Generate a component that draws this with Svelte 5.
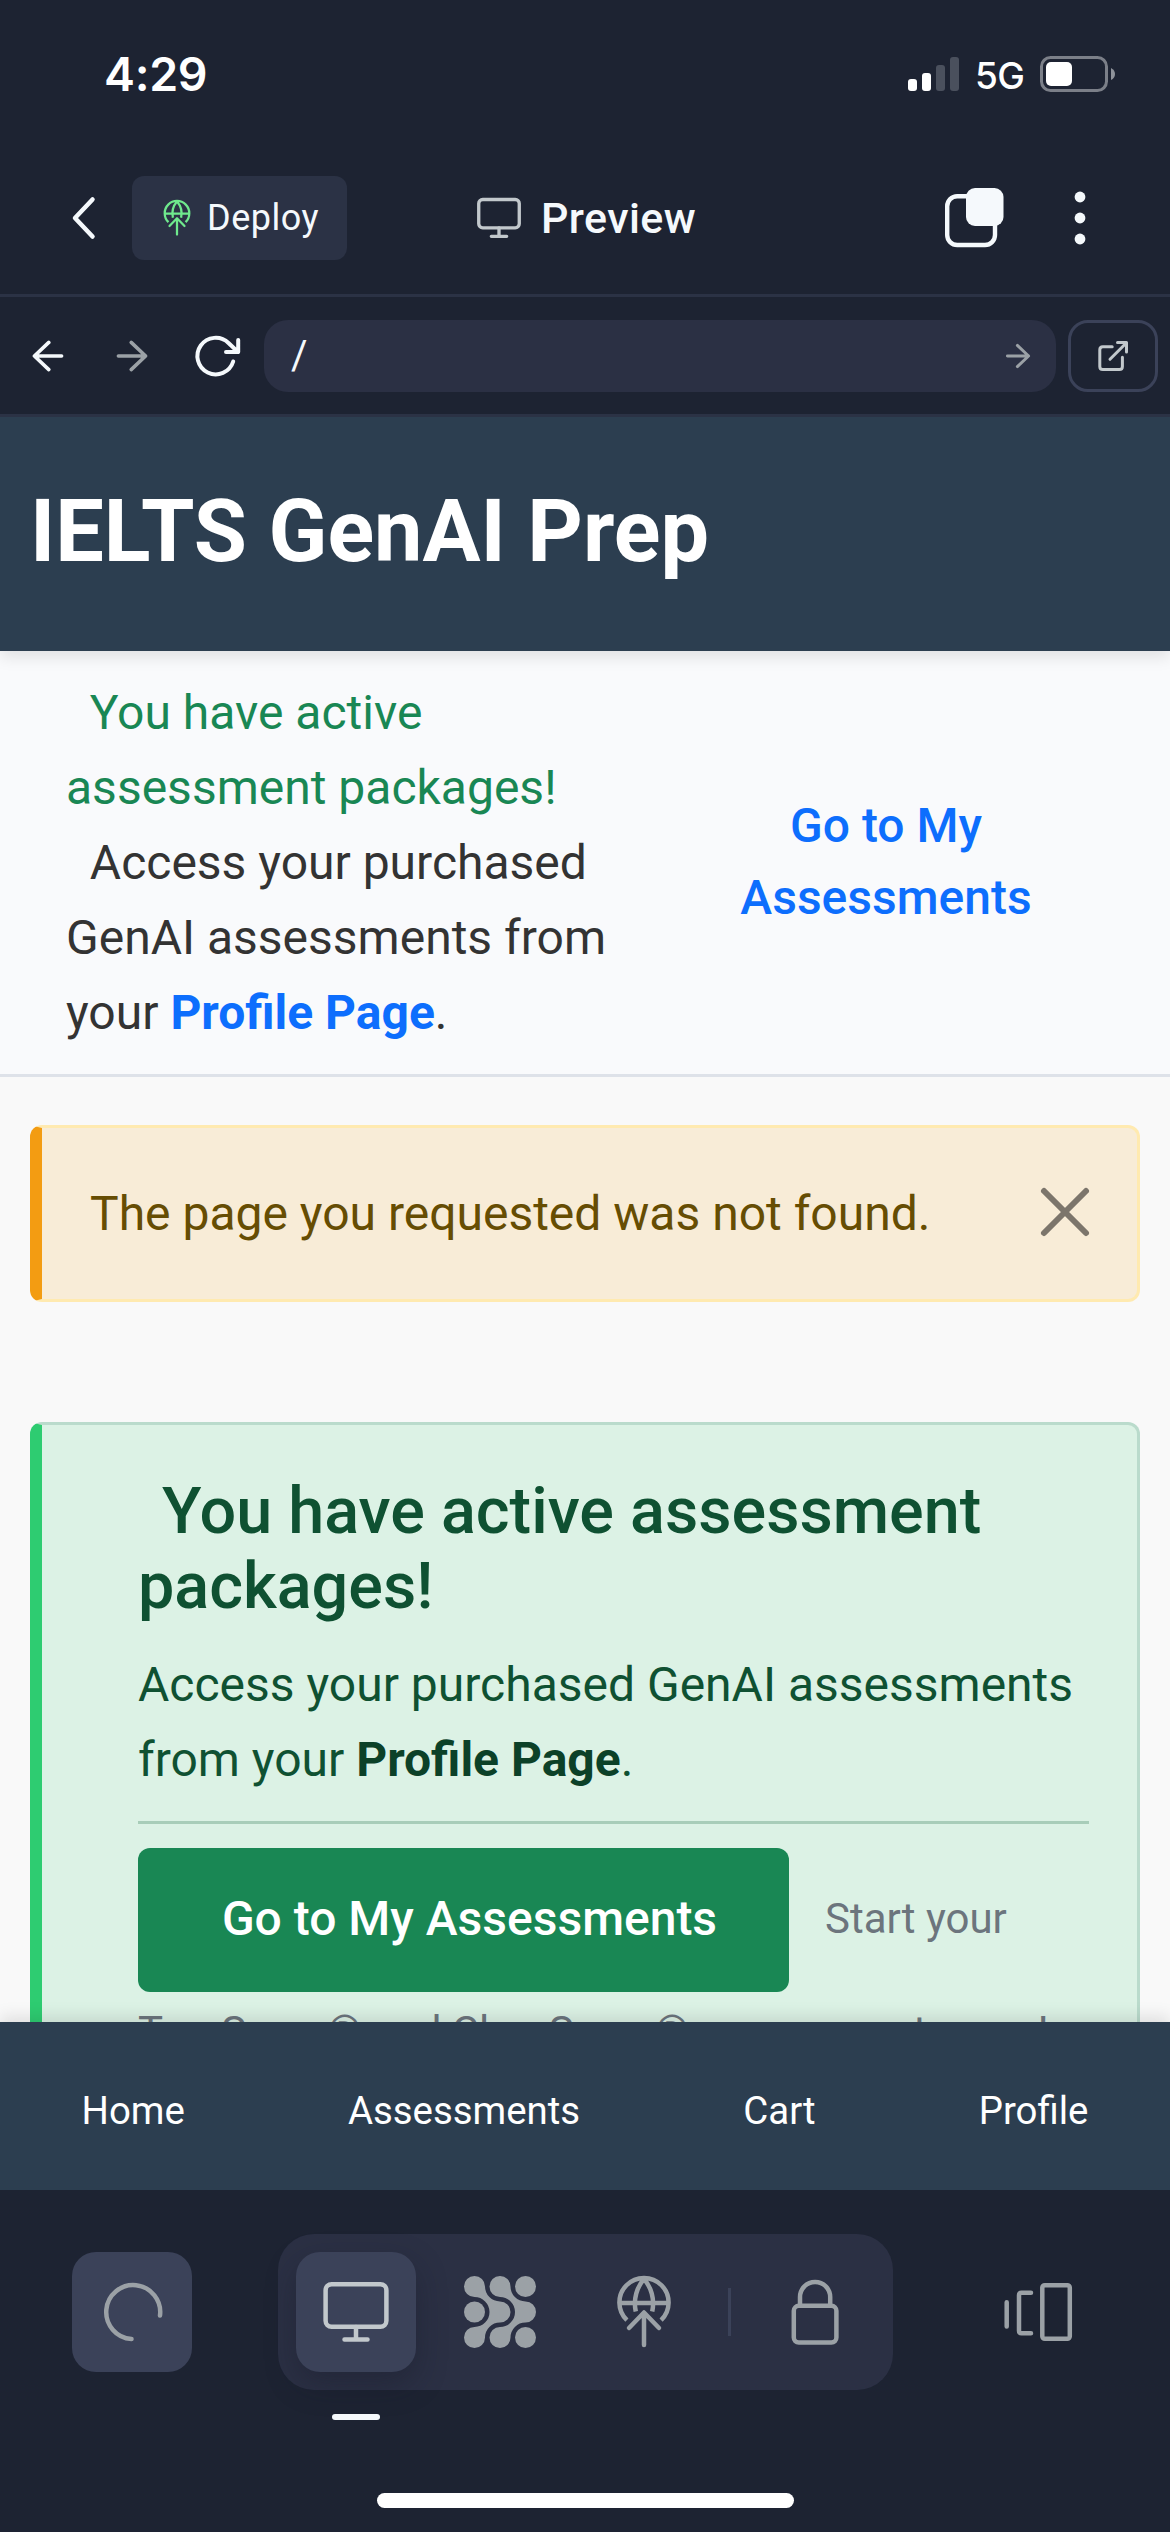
<script>
  const tabs = ['Home', 'Assessments', 'Cart', 'Profile'];
  const bars = ['b1', 'b2', 'b3 dim', 'b4 dim'];
</script>

{#snippet monitor()}
  <svg class="monitor" viewBox="0 0 72 72">
    <rect x="5.6" y="8.2" width="60.8" height="42.6" rx="6" />
    <path d="M36 51V63.5M24.5 63.5H47.5" />
  </svg>
{/snippet}

{#snippet publish()}
  <svg class="publish" viewBox="0 0 72 72">
    <path class="butt" d="M18.9 44.2A24.6 24.6 0 1 1 53.1 44.2M11.5 27H60.5M36 3C29 11 25 23 27.8 35.5M36 3C43 11 47 23 44.2 35.5" />
    <path d="M36 37V69M21 52L36 36.5L51 52" />
  </svg>
{/snippet}

{#snippet arrow()}
  <svg viewBox="0 0 36 36"><path d="M4.4 18H31.6M17.2 4.4L31.6 18L17.2 31.6" /></svg>
{/snippet}

<div class="screen">
  <div class="status">
    <span class="time">4:29</span>
    <div class="signals">
      <div class="bars">{#each bars as bar}<i class={bar}></i>{/each}</div>
      <span class="network">5G</span>
      <svg class="battery" viewBox="0 0 76 36">
        <rect class="shell" x="1.5" y="1.5" width="65" height="33" rx="9" />
        <rect class="charge" x="6" y="6" width="26" height="24" rx="5" />
        <path class="nub" d="M71 12Q75 14 75 18Q75 22 71 24Z" />
      </svg>
    </div>
  </div>

  <div class="topbar">
    <svg class="back" viewBox="0 0 24 42"><path d="M20.5 2.5L3 21L20.5 39.5" /></svg>
    <button class="deploy">{@render publish()}<span>Deploy</span></button>
    <div class="title">{@render monitor()}<span>Preview</span></div>
    <svg class="copy" viewBox="0 0 60 60">
      <rect class="line" x="3.2" y="8.2" width="47.8" height="48.8" rx="10" />
      <rect class="solid" x="22" y="0" width="37.5" height="38" rx="9" />
    </svg>
    <svg class="dots" viewBox="0 0 12 54">
      <circle cx="6" cy="6" r="5.4" /><circle cx="6" cy="27" r="5.4" /><circle cx="6" cy="48" r="5.4" />
    </svg>
  </div>

  <div class="addressbar">
    <div class="cell flip">{@render arrow()}</div>
    <div class="cell faded">{@render arrow()}</div>
    <div class="cell reload">
      <svg viewBox="0 0 48 48"><path d="M41.2 29.5A18.3 18.3 0 1 1 36.5 11L46 20M46.2 8V20H34" /></svg>
    </div>
    <div class="url"><span>/</span>{@render arrow()}</div>
    <button class="external" aria-label="Open in new tab">
      <svg viewBox="0 0 36 36">
        <path d="M17.2 8.8H7.8Q4.8 8.8 4.8 11.8V28.6Q4.8 31.6 7.8 31.6H24.4Q27.4 31.6 27.4 28.6V19.3M15 21.3L31.5 4.7M22.5 4.5H31.5V14" />
      </svg>
    </button>
  </div>

  <main class="page">
    <header><h1>IELTS GenAI Prep</h1></header>
    <section class="banner">
      <p>
        <span class="success">&nbsp;&nbsp;You have active<br />assessment packages!</span><br />
        &nbsp;&nbsp;Access your purchased<br />GenAI assessments from<br />your <b>Profile Page</b>.
      </p>
      <div class="cta">Go to My<br />Assessments</div>
    </section>

    <div class="alert">
      <span>The page you requested was not found.</span>
      <svg viewBox="0 0 48 48"><path d="M3 3L45 45M45 3L3 45" /></svg>
    </div>

    <section class="packages">
      <h4>You have active assessment<br />packages!</h4>
      <p>Access your purchased GenAI assessments<br />from your <b>Profile Page</b>.</p>
      <hr />
      <div class="action"><button>Go to My Assessments</button><small>Start your</small></div>
      <small class="more">TrueScore® and ClearScore® assessments now!</small>
    </section>

    <nav>{#each tabs as tab}<span>{tab}</span>{/each}</nav>
  </main>

  <footer>
    <div class="tools">
      <div class="tool filled">
        <svg viewBox="0 0 72 72"><path d="M64 39.5A27 27 0 1 0 35.5 63" /></svg>
      </div>
      <div class="group">
        <div class="tool filled active">{@render monitor()}</div>
        <div class="tool">
          <svg class="mesh" viewBox="0 0 72 72">
            <path d="M10.5 0A10.5 10.5 0 0 1 21 10.5A15 15 0 0 0 36 25.5A10.5 10.5 0 0 1 36 46.5A15 15 0 0 0 21 61.5A10.5 10.5 0 1 1 10.5 51A15 15 0 0 0 10.5 21A10.5 10.5 0 0 1 10.5 0Z" />
            <path d="M36 0A10.5 10.5 0 0 1 46.5 10.5A15 15 0 0 0 61.5 25.5A10.5 10.5 0 0 1 61.5 46.5A15 15 0 0 0 46.5 61.5A10.5 10.5 0 1 1 36 51A15 15 0 0 0 36 21A10.5 10.5 0 0 1 36 0Z" />
            <circle cx="61.5" cy="10.5" r="10.5" /><circle cx="10.5" cy="36" r="10.5" /><circle cx="61.5" cy="61.5" r="10.5" />
          </svg>
        </div>
        <div class="tool">{@render publish()}</div>
        <i class="split"></i>
        <div class="tool">
          <svg viewBox="0 0 72 72">
            <rect x="14.8" y="29.8" width="42.6" height="36.8" rx="5" />
            <path d="M21 29.5V21A15.1 15.1 0 0 1 51.2 21V29.5" />
          </svg>
        </div>
      </div>
      <svg class="windows" viewBox="0 0 72 72">
        <path d="M4.7 26.3V50.5M29 16.7H19.5Q17 16.7 17 19.2V54.8Q17 57.3 19.5 57.3H29" />
        <rect x="40.3" y="9.2" width="27.5" height="53.6" rx="2.5" />
      </svg>
    </div>
    <i class="marker"></i>
    <i class="home"></i>
  </footer>
</div>

<style>
  :global(body) { margin: 0; background: #1d2332; }
  * { box-sizing: border-box; }
  .screen {
    width: 1170px; height: 2532px; display: flex; flex-direction: column; overflow: hidden;
    background: #1d2332; color: #f5f9fc; font-family: Roboto, sans-serif;
  }
  svg { display: block; flex: none; fill: none; stroke: currentColor; stroke-width: 4.5; stroke-linecap: round; stroke-linejoin: round; overflow: visible; }
  button { border: 0; margin: 0; padding: 0; font: inherit; color: inherit; }
  i { display: block; }
  h1, h4, p { margin: 0; }

  .status { height: 147px; padding: 1px 54px 0 104px; display: flex; justify-content: space-between; align-items: center; color: #fff; font-family: Inter, sans-serif; }
  .time { font-size: 46.5px; font-weight: 600; line-height: 60px; letter-spacing: -.3px; }
  .signals { display: flex; align-items: center; }
  .bars { display: flex; align-items: flex-end; gap: 5px; height: 34px; margin-right: 16px; }
  .bars i { width: 9px; border-radius: 3px; background: #fff; }
  .bars .dim { background: #4a505d; }
  .b1 { height: 12px; } .b2 { height: 18px; } .b3 { height: 26px; } .b4 { height: 34px; }
  .network { width: 49px; margin-right: 16px; font-size: 37px; font-weight: 500; line-height: 40px; padding-top: 3px; letter-spacing: -.5px; }
  .battery { width: 76px; height: 36px; }
  .shell { stroke: #7b7f88; stroke-width: 3; }
  .charge { fill: #fff; stroke: none; }
  .nub { fill: #8e929a; stroke: none; }

  .topbar { height: 150px; padding: 0 84px 5px 72px; display: flex; align-items: center; border-bottom: 3px solid #2b3245; }
  .back { width: 24px; height: 42px; }
  .deploy { width: 215px; height: 84px; margin-left: 36px; padding-left: 27px; display: flex; align-items: center; border-radius: 12px; background: #2b3245; }
  .deploy svg { width: 36px; height: 36px; color: #6fe98d; }
  .deploy span { margin-left: 12px; font-size: 36px; line-height: 44px; letter-spacing: .5px; }
  .title { margin-left: 128px; display: flex; align-items: center; font-size: 43px; font-weight: 500; letter-spacing: .4px; }
  .title svg { width: 48px; height: 48px; color: #c2c8cc; stroke-width: 5; }
  .title span { margin-left: 18px; }
  .copy { width: 60px; height: 60px; margin-left: auto; stroke-width: 4.4; }
  .solid { fill: currentColor; stroke: none; }
  .dots { width: 12px; height: 54px; margin-left: 70px; fill: currentColor; stroke: none; }

  .addressbar { height: 120px; padding: 0 12px 0 6px; display: flex; align-items: center; border-bottom: 3px solid #2b3245; }
  .cell { width: 84px; display: flex; justify-content: center; }
  .cell svg { width: 36px; height: 36px; stroke-width: 3.6; }
  .flip { transform: scaleX(-1); }
  .faded { color: #9ba1a6; }
  .cell.reload svg { width: 48px; height: 48px; stroke-width: 4; }
  .url { width: 792px; height: 72px; margin-left: 6px; padding: 0 24px 0 27px; display: flex; align-items: center; justify-content: space-between; border-radius: 24px; background: #2b3044; font-size: 40px; }
  .url svg { width: 28px; height: 28px; color: #9ba1a6; stroke-width: 3.8; }
  .external { width: 90px; height: 72px; margin-left: 12px; display: flex; align-items: center; justify-content: center; border: 3px solid #3b4259; border-radius: 20px; background: none; color: #c2c8cc; }
  .external svg { width: 36px; height: 36px; stroke-width: 3; }

  .page { position: relative; height: 1773px; display: flex; flex-direction: column; overflow: hidden; background: #f9f9f9; color: #333; font-size: 48px; line-height: 75px; white-space: nowrap; }
  header { position: relative; flex: none; height: 234px; padding: 0 30px 5px; display: flex; align-items: center; background: #2c3e50; color: #fff; box-shadow: 0 6px 15px rgba(0, 0, 0, .1); }
  h1 { font-size: 86.4px; font-weight: 700; line-height: 104px; }
  .banner { flex: none; height: 426px; padding: 24px 66px 0; display: flex; background: #f9fafc; border-bottom: 3px solid #dee2e9; }
  .banner p { width: 616px; }
  .success { color: #198754; }
  .banner b, .cta { color: #0d6efd; }
  .cta { width: 408px; padding-top: 115px; text-align: center; font-weight: 500; line-height: 72px; }
  .alert { flex: none; height: 177px; margin: 48px 30px 0; padding: 0 48px; display: flex; align-items: center; justify-content: space-between; border: 3px solid #ffeab0; border-left: 12px solid #f39c12; border-radius: 12px; background: #f8ecd7; color: #664d03; }
  .alert svg { width: 48px; height: 48px; margin-bottom: 3px; color: #7c756b; stroke-width: 6; }
  .packages { flex: none; height: 700px; margin: 120px 30px 0; padding: 49px 48px 0 96px; border: 3px solid #badbcc; border-left: 12px solid #2ecc71; border-radius: 12px; background: #dcf2e5; color: #0f5132; }
  h4 { font-size: 64.7px; font-weight: 500; line-height: 75px; margin-bottom: 23px; text-indent: 24px; }
  .packages b { color: #0c4128; }
  hr { height: 3px; margin: 24px 0; border: 0; background: #a8cdb9; }
  .action { display: flex; align-items: center; }
  .action button { width: 651px; height: 144px; padding: 0 0 3px 12px; border-radius: 12px; background: #198754; color: #fff; font-weight: 500; }
  small { font-size: 42px; color: #6c757d; }
  .action small { margin-left: 36px; padding-bottom: 3px; }
  .more { display: block; padding-top: 2px; }
  nav { position: absolute; left: 0; right: 0; bottom: 0; height: 168px; padding-top: 8px; display: flex; align-items: center; justify-content: space-around; background: #2c3e50; color: #fff; font-size: 38.4px; box-shadow: 0 -6px 15px rgba(0, 0, 0, .1); }

  footer { height: 342px; padding-top: 44px; display: flex; flex-direction: column; align-items: center; }
  .tools { width: 100%; height: 156px; padding: 0 96px 0 72px; display: flex; align-items: center; color: #9ba1a6; }
  .tool { width: 120px; height: 120px; margin-right: 24px; display: flex; align-items: center; justify-content: center; border-radius: 24px; }
  .tool svg, .windows { width: 72px; height: 72px; }
  .filled { background: #3b4259; }
  .group { width: 615px; height: 156px; margin-left: 62px; padding-left: 18px; display: flex; align-items: center; border-radius: 36px; background: #2b3044; }
  .active { color: #c2c8cc; box-shadow: 0 12px 30px rgba(20, 24, 38, .35); }
  .mesh { fill: currentColor; stroke: none; }
  .butt { stroke-linecap: butt; }
  .split { width: 3px; height: 48px; margin: 0 24px 0 0; background: #3b4259; }
  .group .tool:last-child { margin-right: 0; }
  .windows { margin-left: 109px; }
  .marker { width: 48px; height: 6px; margin: 24px 0 0 -458px; border-radius: 3px; background: #f5f9fc; }
  .home { width: 417px; height: 15px; margin-top: 73px; border-radius: 8px; background: #fff; }
</style>
